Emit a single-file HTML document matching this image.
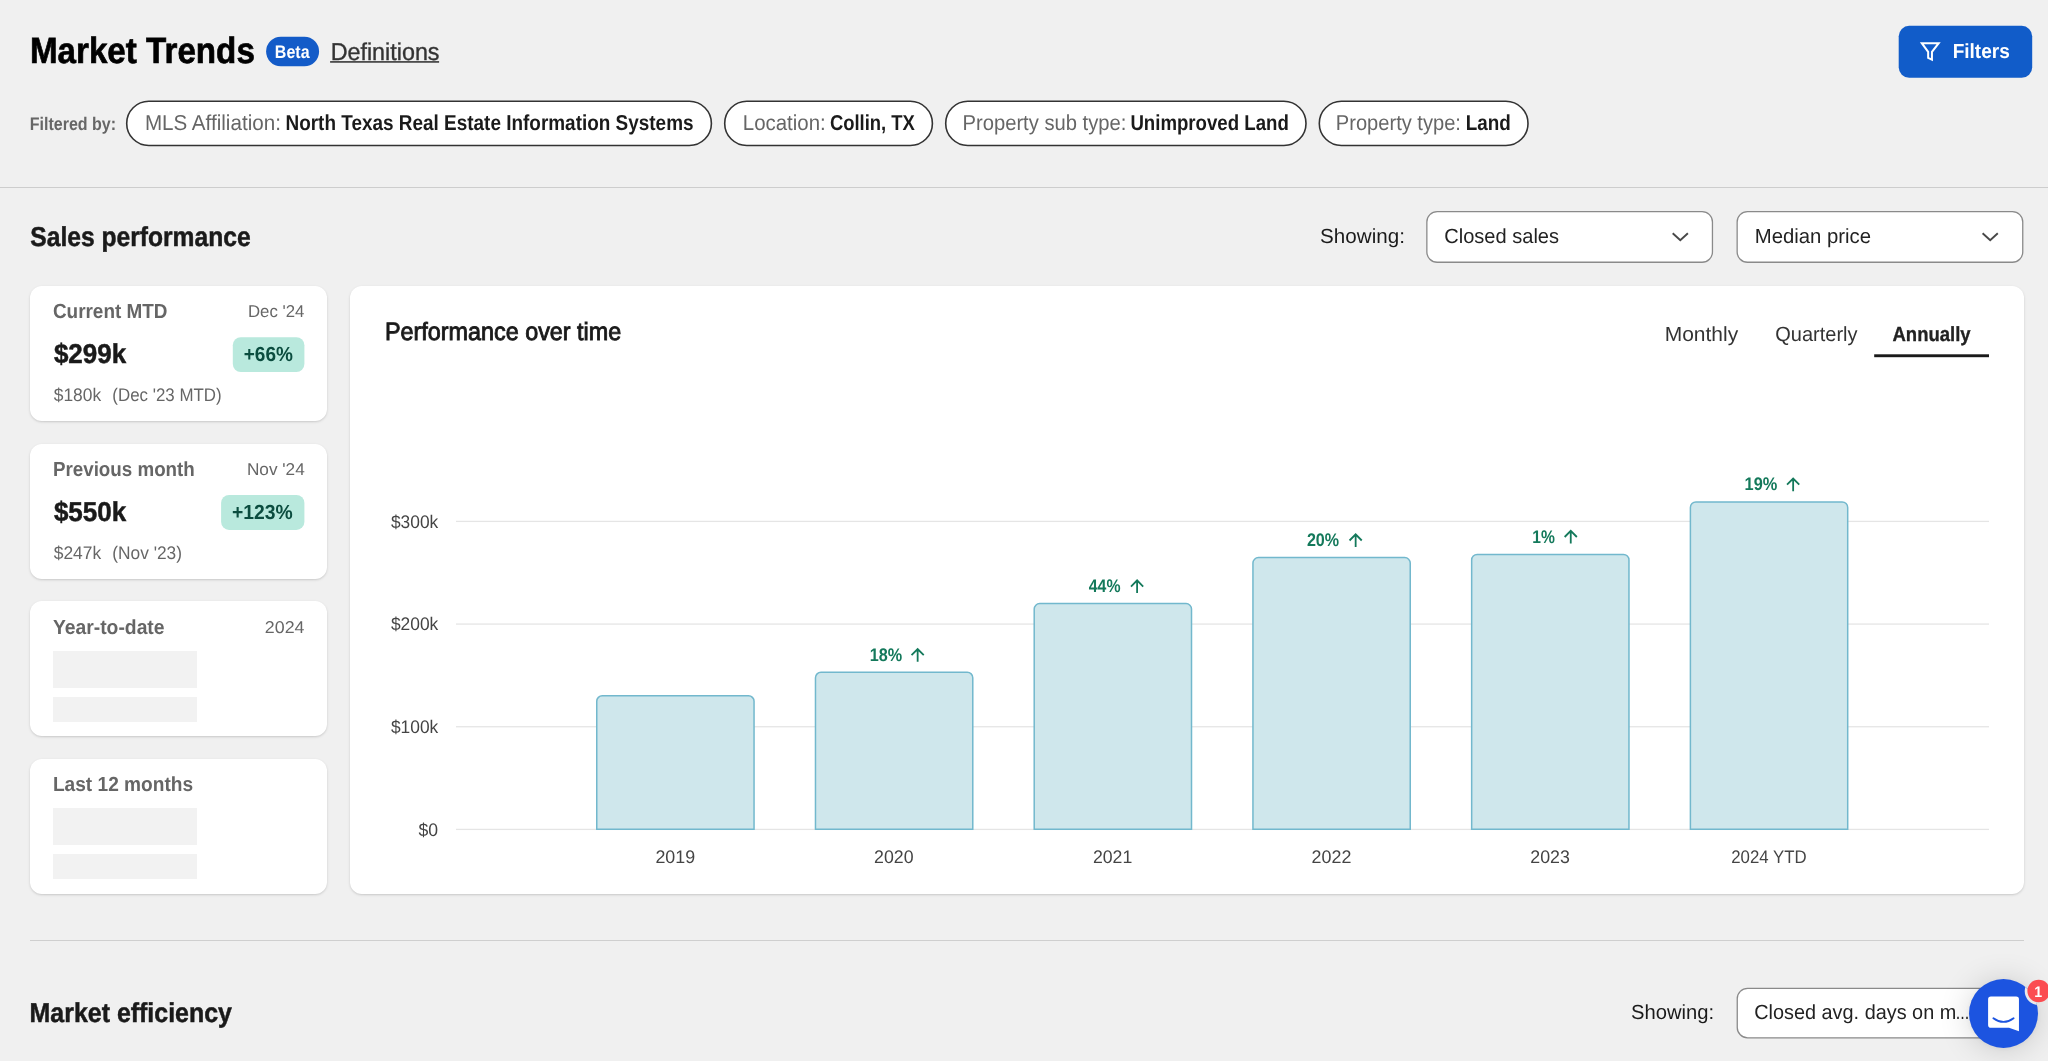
<!DOCTYPE html>
<html><head><meta charset="utf-8"><title>Market Trends</title><style>
html,body{margin:0;padding:0}body{width:2048px;height:1061px;overflow:hidden;background:#f0f0f0;font-family:"Liberation Sans", sans-serif;position:relative;text-rendering:geometricPrecision}
#r{will-change:transform}#r>div,#r>svg,#r>span{position:absolute;display:block}
#r>span{white-space:nowrap;line-height:1;transform-origin:0 0}
.card{background:#fff;border-radius:12px;box-shadow:0 1px 3px rgba(0,0,0,0.12),0 1px 2px rgba(0,0,0,0.06)}
</style></head><body><div id="r">
<div style="left:0;top:187px;width:2048px;height:1px;background:#cdcdcd"></div>
<div style="left:30px;top:940px;width:1994px;height:1px;background:#cfcfcf"></div>
<div class="card" style="left:30px;top:286px;width:297px;height:135px"></div>
<div class="card" style="left:30px;top:444px;width:297px;height:135px"></div>
<div class="card" style="left:30px;top:601px;width:297px;height:135px"></div>
<div class="card" style="left:30px;top:759px;width:297px;height:135px"></div>
<div class="card" style="left:350px;top:286px;width:1674px;height:608px"></div>
<div style="left:53px;top:651px;width:144px;height:37px;background:#f2f2f2"></div>
<div style="left:53px;top:697px;width:144px;height:25px;background:#f2f2f2"></div>
<div style="left:53px;top:808px;width:144px;height:37px;background:#f2f2f2"></div>
<div style="left:53px;top:854px;width:144px;height:25px;background:#f2f2f2"></div>
<svg style="left:0;top:0" width="2048" height="1061" viewBox="0 0 2048 1061">
<rect x="266.10" y="36.70" width="53.00" height="29.50" rx="14.75" fill="#135bc8"/>
<rect x="1898.70" y="25.80" width="133.50" height="52.00" rx="10.50" fill="#115cc9"/>
<path transform="translate(1919.8 42.2)" d="M2.0 1 H18.9 L12.15 9.7 V17.4 L8.35 15.6 V9.7 Z" fill="none" stroke="#fff" stroke-width="2" stroke-linejoin="miter"/>
<rect x="330.1" y="61.0" width="109" height="1.8" fill="#4d4d4d"/>
<rect x="126.70" y="101.30" width="584.70" height="44.20" rx="22.10" fill="#fff" stroke="#333" stroke-width="1.6"/>
<rect x="724.70" y="101.30" width="207.70" height="44.20" rx="22.10" fill="#fff" stroke="#333" stroke-width="1.6"/>
<rect x="945.70" y="101.30" width="360.30" height="44.20" rx="22.10" fill="#fff" stroke="#333" stroke-width="1.6"/>
<rect x="1319.30" y="101.30" width="208.70" height="44.20" rx="22.10" fill="#fff" stroke="#333" stroke-width="1.6"/>
<rect x="1426.85" y="211.60" width="285.60" height="50.65" rx="10.35" fill="#fff" stroke="#8a8a8a" stroke-width="1.3"/>
<rect x="1737.15" y="211.60" width="285.60" height="50.65" rx="10.35" fill="#fff" stroke="#8a8a8a" stroke-width="1.3"/>
<rect x="1737.25" y="988.35" width="285.50" height="49.50" rx="10.35" fill="#fff" stroke="#8a8a8a" stroke-width="1.3"/>
<path d="M1672.7 233.2 L1680.3 240.3 L1687.8999999999999 233.2" fill="none" stroke="#484848" stroke-width="1.9" stroke-linecap="butt" stroke-linejoin="miter"/>
<path d="M1982.6000000000001 233.2 L1990.2 240.3 L1997.8 233.2" fill="none" stroke="#484848" stroke-width="1.9" stroke-linecap="butt" stroke-linejoin="miter"/>
<rect x="232.80" y="337.20" width="71.60" height="34.90" rx="8.00" fill="#b9e9dd"/>
<rect x="221.10" y="495.00" width="83.30" height="34.90" rx="8.00" fill="#b9e9dd"/>
<rect x="1874.2" y="354.3" width="114.8" height="2.9" fill="#1a1a1a"/>
<rect x="456" y="520.75" width="1533" height="1.3" fill="#e5e5e5"/>
<rect x="456" y="623.42" width="1533" height="1.3" fill="#e5e5e5"/>
<rect x="456" y="726.09" width="1533" height="1.3" fill="#e5e5e5"/>
<rect x="456" y="828.76" width="1533" height="1.3" fill="#e5e5e5"/>
<path d="M596.75 829.35 V701.25 a5.5 5.5 0 0 1 5.5 -5.5 H748.55 a5.5 5.5 0 0 1 5.5 5.5 V829.35 Z" fill="#cfe7ec" stroke="#72b8cd" stroke-width="1.5"/>
<path d="M815.48 829.35 V677.75 a5.5 5.5 0 0 1 5.5 -5.5 H967.28 a5.5 5.5 0 0 1 5.5 5.5 V829.35 Z" fill="#cfe7ec" stroke="#72b8cd" stroke-width="1.5"/>
<path d="M1034.21 829.35 V609.05 a5.5 5.5 0 0 1 5.5 -5.5 H1186.01 a5.5 5.5 0 0 1 5.5 5.5 V829.35 Z" fill="#cfe7ec" stroke="#72b8cd" stroke-width="1.5"/>
<path d="M1252.94 829.35 V563.05 a5.5 5.5 0 0 1 5.5 -5.5 H1404.74 a5.5 5.5 0 0 1 5.5 5.5 V829.35 Z" fill="#cfe7ec" stroke="#72b8cd" stroke-width="1.5"/>
<path d="M1471.67 829.35 V559.95 a5.5 5.5 0 0 1 5.5 -5.5 H1623.47 a5.5 5.5 0 0 1 5.5 5.5 V829.35 Z" fill="#cfe7ec" stroke="#72b8cd" stroke-width="1.5"/>
<path d="M1690.40 829.35 V507.45 a5.5 5.5 0 0 1 5.5 -5.5 H1842.20 a5.5 5.5 0 0 1 5.5 5.5 V829.35 Z" fill="#cfe7ec" stroke="#72b8cd" stroke-width="1.5"/>
<path d="M917.65 661.70 V649.20 M911.55 655.20 L917.65 649.00 L923.75 655.20" fill="none" stroke="#14795b" stroke-width="1.8" stroke-linecap="butt" stroke-linejoin="miter"/>
<path d="M1137.10 593.10 V580.60 M1131.00 586.60 L1137.10 580.40 L1143.20 586.60" fill="none" stroke="#14795b" stroke-width="1.8" stroke-linecap="butt" stroke-linejoin="miter"/>
<path d="M1355.65 547.00 V534.50 M1349.55 540.50 L1355.65 534.30 L1361.75 540.50" fill="none" stroke="#14795b" stroke-width="1.8" stroke-linecap="butt" stroke-linejoin="miter"/>
<path d="M1570.75 543.50 V531.00 M1564.65 537.00 L1570.75 530.80 L1576.85 537.00" fill="none" stroke="#14795b" stroke-width="1.8" stroke-linecap="butt" stroke-linejoin="miter"/>
<path d="M1793.15 491.20 V478.70 M1787.05 484.70 L1793.15 478.50 L1799.25 484.70" fill="none" stroke="#14795b" stroke-width="1.8" stroke-linecap="butt" stroke-linejoin="miter"/>
</svg>
<span style="left:29px;top:33px;font-size:36.4px;font-weight:700;color:#000;transform:translate(0.91px,0.00px) scaleX(0.9116);-webkit-text-stroke:0.7px #000;">Market Trends</span>
<span style="left:274px;top:42px;font-size:18.2px;font-weight:700;color:#fff;transform:translate(0.87px,0.70px) scaleX(0.8792);">Beta</span>
<span style="left:330px;top:40px;font-size:24.3px;color:#333;transform:translate(0.64px,0.85px) scaleX(0.9597);-webkit-text-stroke:0.35px #333;">Definitions</span>
<span style="left:1952px;top:41px;font-size:20.5px;font-weight:700;color:#fff;transform:translate(0.65px,0.80px) scaleX(0.9293);">Filters</span>
<span style="left:29px;top:114px;font-size:18.2px;font-weight:700;color:#666666;transform:translate(0.73px,0.50px) scaleX(0.8804);">Filtered by:</span>
<span style="left:144px;top:111px;font-size:21.6px;color:#666666;transform:translate(0.88px,0.90px) scaleX(0.9549);">MLS Affiliation:</span>
<span style="left:285px;top:111px;font-size:21.6px;font-weight:700;color:#1a1a1a;transform:translate(0.49px,0.90px) scaleX(0.8771);">North Texas Real Estate Information Systems</span>
<span style="left:742px;top:111px;font-size:21.6px;color:#666666;transform:translate(0.80px,0.90px) scaleX(0.9463);">Location:</span>
<span style="left:829px;top:111px;font-size:21.6px;font-weight:700;color:#1a1a1a;transform:translate(0.88px,0.90px) scaleX(0.8541);">Collin, TX</span>
<span style="left:962px;top:111px;font-size:21.6px;color:#666666;transform:translate(0.51px,0.90px) scaleX(0.9351);">Property sub type:</span>
<span style="left:1130px;top:111px;font-size:21.6px;font-weight:700;color:#1a1a1a;transform:translate(0.39px,0.90px) scaleX(0.8628);">Unimproved Land</span>
<span style="left:1335px;top:111px;font-size:21.6px;color:#666666;transform:translate(0.83px,0.90px) scaleX(0.9304);">Property type:</span>
<span style="left:1465px;top:111px;font-size:21.6px;font-weight:700;color:#1a1a1a;transform:translate(0.68px,0.90px) scaleX(0.8741);">Land</span>
<span style="left:30px;top:222px;font-size:27.3px;font-weight:700;color:#1a1a1a;transform:translate(0.26px,0.50px) scaleX(0.9021);-webkit-text-stroke:0.5px #1a1a1a;">Sales performance</span>
<span style="left:1320px;top:226px;font-size:20.5px;color:#1a1a1a;transform:translate(0.12px,0.80px) scaleX(1.0050);">Showing:</span>
<span style="left:1444px;top:226px;font-size:20.5px;color:#222;transform:translate(0.22px,0.80px) scaleX(0.9783);">Closed sales</span>
<span style="left:1754px;top:226px;font-size:20.5px;color:#222;transform:translate(0.75px,0.80px) scaleX(0.9911);">Median price</span>
<span style="left:52px;top:301px;font-size:20.5px;font-weight:700;color:#666666;transform:translate(0.94px,0.90px) scaleX(0.9226);">Current MTD</span>
<span style="left:247px;top:303px;font-size:17.05px;color:#666666;transform:translate(0.95px,0.40px) scaleX(0.9860);">Dec '24</span>
<span style="left:53px;top:339px;font-size:27.3px;font-weight:700;color:#1a1a1a;transform:translate(0.89px,0.70px) scaleX(0.9529);-webkit-text-stroke:0.5px #1a1a1a;">$299k</span>
<span style="left:243px;top:345px;font-size:20.5px;font-weight:700;color:#0b4d3f;transform:translate(0.73px,0.00px) scaleX(0.9266);">+66%</span>
<span style="left:53px;top:386px;font-size:18.2px;color:#666666;transform:translate(0.75px,0.00px) scaleX(0.9563);">$180k</span>
<span style="left:112px;top:386px;font-size:18.2px;color:#666666;transform:translate(0.31px,0.00px) scaleX(0.9288);">(Dec '23 MTD)</span>
<span style="left:52px;top:459px;font-size:20.5px;font-weight:700;color:#666666;transform:translate(0.92px,0.80px) scaleX(0.9158);">Previous month</span>
<span style="left:246px;top:461px;font-size:17.05px;color:#666666;transform:translate(0.88px,0.30px) scaleX(1.0110);">Nov '24</span>
<span style="left:53px;top:497px;font-size:27.3px;font-weight:700;color:#1a1a1a;transform:translate(0.88px,0.60px) scaleX(0.9532);-webkit-text-stroke:0.5px #1a1a1a;">$550k</span>
<span style="left:231px;top:502px;font-size:20.5px;font-weight:700;color:#0b4d3f;transform:translate(0.97px,0.90px) scaleX(0.9431);">+123%</span>
<span style="left:53px;top:544px;font-size:18.2px;color:#666666;transform:translate(0.75px,0.00px) scaleX(0.9563);">$247k</span>
<span style="left:112px;top:544px;font-size:18.2px;color:#666666;transform:translate(0.28px,0.00px) scaleX(0.9527);">(Nov '23)</span>
<span style="left:52px;top:617px;font-size:20.5px;font-weight:700;color:#666666;transform:translate(0.90px,0.75px) scaleX(0.9424);">Year-to-date</span>
<span style="left:264px;top:619px;font-size:17.05px;color:#666666;transform:translate(0.86px,0.30px) scaleX(1.0455);">2024</span>
<span style="left:52px;top:775px;font-size:20.5px;font-weight:700;color:#666666;transform:translate(0.89px,0.00px) scaleX(0.9326);">Last 12 months</span>
<span style="left:384px;top:319px;font-size:25px;color:#1a1a1a;transform:translate(0.92px,0.80px) scaleX(0.9346);-webkit-text-stroke:0.9px #1a1a1a;">Performance over time</span>
<span style="left:1664px;top:325px;font-size:20.5px;color:#333;transform:translate(0.71px,0.30px) scaleX(1.0230);">Monthly</span>
<span style="left:1775px;top:325px;font-size:20.5px;color:#333;transform:translate(0.31px,0.30px) scaleX(0.9754);">Quarterly</span>
<span style="left:1892px;top:325px;font-size:20.5px;font-weight:700;color:#222;transform:translate(0.51px,0.30px) scaleX(0.9027);-webkit-text-stroke:0.3px #222;">Annually</span>
<span style="left:390px;top:512px;font-size:18.2px;color:#444;transform:translate(0.92px,0.70px) scaleX(0.9554);">$300k</span>
<span style="left:390px;top:615px;font-size:18.2px;color:#444;transform:translate(0.92px,0.40px) scaleX(0.9560);">$200k</span>
<span style="left:390px;top:718px;font-size:18.2px;color:#444;transform:translate(0.95px,0.00px) scaleX(0.9537);">$100k</span>
<span style="left:418px;top:820px;font-size:18.2px;color:#444;transform:translate(0.39px,0.70px) scaleX(0.9686);">$0</span>
<span style="left:655px;top:848px;font-size:18.2px;color:#444;transform:translate(0.43px,0.00px) scaleX(0.9813);">2019</span>
<span style="left:874px;top:848px;font-size:18.2px;color:#444;transform:translate(0.11px,0.00px) scaleX(0.9748);">2020</span>
<span style="left:1092px;top:848px;font-size:18.2px;color:#444;transform:translate(0.88px,0.00px) scaleX(0.9720);">2021</span>
<span style="left:1311px;top:848px;font-size:18.2px;color:#444;transform:translate(0.62px,0.00px) scaleX(0.9837);">2022</span>
<span style="left:1530px;top:848px;font-size:18.2px;color:#444;transform:translate(0.32px,0.00px) scaleX(0.9781);">2023</span>
<span style="left:1731px;top:848px;font-size:18.2px;color:#444;transform:translate(0.22px,0.00px) scaleX(0.9239);">2024 YTD</span>
<span style="left:869px;top:645px;font-size:18.2px;font-weight:700;color:#14795b;transform:translate(0.85px,0.80px) scaleX(0.8909);">18%</span>
<span style="left:1088px;top:577px;font-size:18.2px;font-weight:700;color:#14795b;transform:translate(0.76px,0.20px) scaleX(0.8710);">44%</span>
<span style="left:1306px;top:531px;font-size:18.2px;font-weight:700;color:#14795b;transform:translate(0.88px,0.10px) scaleX(0.8850);">20%</span>
<span style="left:1532px;top:527px;font-size:18.2px;font-weight:700;color:#14795b;transform:translate(0.22px,0.60px) scaleX(0.8605);">1%</span>
<span style="left:1744px;top:475px;font-size:18.2px;font-weight:700;color:#14795b;transform:translate(0.55px,0.30px) scaleX(0.8990);">19%</span>
<span style="left:29px;top:999px;font-size:27.3px;font-weight:700;color:#1a1a1a;transform:translate(0.57px,0.00px) scaleX(0.9135);-webkit-text-stroke:0.5px #1a1a1a;">Market efficiency</span>
<span style="left:1631px;top:1003px;font-size:20.5px;color:#1a1a1a;transform:translate(0.02px,0.00px) scaleX(0.9854);">Showing:</span>
<span style="left:1754px;top:1003px;font-size:20.5px;color:#222;transform:translate(0.24px,0.00px) scaleX(0.9688);">Closed avg. days on m</span>
<span style="left:1955px;top:1003px;font-size:20.5px;color:#222;transform:translate(0.75px,0.00px) scaleX(0.7893);">...</span>
<div style="left:1969px;top:979.3px;width:69px;height:69px;border-radius:50%;background:#1c54e0;box-shadow:0 1px 6px rgba(0,0,0,0.06), 0 2px 32px rgba(0,0,0,0.16)"></div>
<svg style="left:1986px;top:994px" width="36" height="40" viewBox="0 0 36 40"><path d="M4.9 2.6 H30.15 a2.8 2.8 0 0 1 2.8 2.8 V37.2 L23 33.7 H4.9 a2.8 2.8 0 0 1 -2.8 -2.8 V5.4 a2.8 2.8 0 0 1 2.8 -2.8 Z" fill="#fff"/><path d="M7.4 24.2 Q17.5 31.6 27.6 24.2" fill="none" stroke="#1c54e0" stroke-width="1.9" stroke-linecap="round"/></svg>
<svg style="left:2020px;top:972px" width="28" height="40" viewBox="0 0 28 40"><clipPath id="lc"><circle cx="-16.5" cy="41.8" r="34.6"/></clipPath><circle cx="18.7" cy="19" r="14" fill="#e9e9e9" clip-path="url(#lc)"/><circle cx="18.7" cy="19" r="11.3" fill="#fb4c51"/></svg>
<span style="left:2034px;top:984px;font-size:15.4px;font-weight:700;color:#fff;transform:translate(0.28px,0.60px) scaleX(0.9235);">1</span>
</div></body></html>
